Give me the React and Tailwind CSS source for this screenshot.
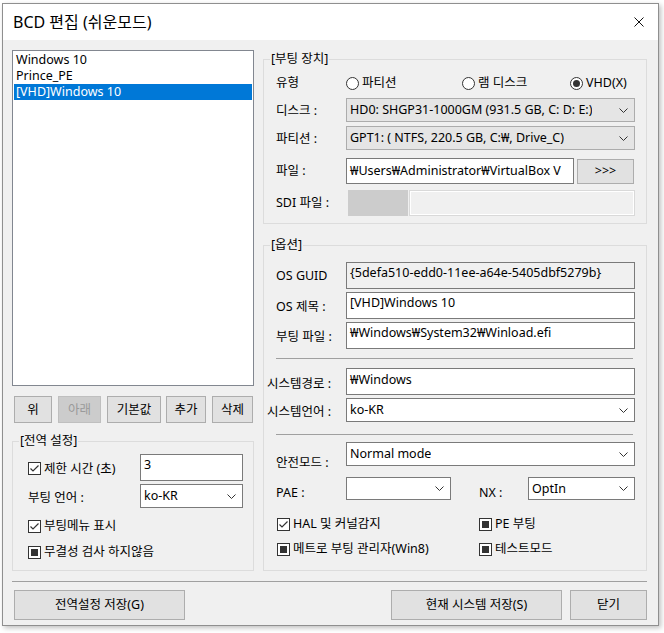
import React from 'react';

const Chevron = () => (
  <svg width="9" height="5" viewBox="0 0 9 5" className="shrink-0">
    <polyline points="0.5,0.5 4.5,4.5 8.5,0.5" fill="none" stroke="#333" strokeWidth="1" />
  </svg>
);

const Select = ({ value, gray, className = '' }) => (
  <div
    className={`flex items-center justify-between pl-[3px] pr-[6px] border ${
      gray ? 'bg-[#e5e5e5] border-[#acacac]' : 'bg-white border-[#7a7a7a]'
    } ${className}`}
  >
    <span className="whitespace-nowrap overflow-hidden">{value}</span>
    <Chevron />
  </div>
);

const Input = ({ value, readOnly, className = '' }) => (
  <div
    className={`flex items-start pl-[3px] pt-[2px] border border-[#7a7a7a] overflow-hidden whitespace-nowrap ${
      readOnly ? 'bg-[#f0f0f0]' : 'bg-white'
    } ${className}`}
  >
    {value}
  </div>
);

const Button = ({ children, disabled, className = '' }) => (
  <div
    className={`flex items-center justify-center border ${
      disabled ? 'bg-[#cccccc] border-[#bfbfbf] text-[#9a9a9a]' : 'bg-[#e1e1e1] border-[#adadad]'
    } ${className}`}
  >
    {children}
  </div>
);

const Check = ({ state, label, className = '' }) => (
  <div className={`flex items-center h-[16px] ${className}`}>
    <div className="w-[13px] h-[13px] border border-[#333] bg-white flex items-center justify-center shrink-0">
      {state === 'checked' && (
        <svg width="11" height="11" viewBox="0 0 11 11">
          <polyline points="1.5,5.5 4,8 9.5,2.5" fill="none" stroke="#333" strokeWidth="1.2" />
        </svg>
      )}
      {state === 'mixed' && <div className="w-[7px] h-[7px] bg-[#333]" />}
    </div>
    <span className="ml-[3px] whitespace-nowrap">{label}</span>
  </div>
);

const Radio = ({ checked, label, className = '' }) => (
  <div className={`flex items-center ${className}`}>
    <div className="w-[13px] h-[13px] rounded-full border border-[#333] bg-white flex items-center justify-center shrink-0">
      {checked && <div className="w-[7px] h-[7px] rounded-full bg-[#333]" />}
    </div>
    <span className="ml-[3px] whitespace-nowrap">{label}</span>
  </div>
);

const Group = ({ label, className = '', children }) => (
  <div className={`relative border border-[#dcdcdc] ${className}`}>
    <span className="absolute left-[6px] -top-[9px] px-px bg-[#f0f0f0] leading-[16px] whitespace-nowrap">
      {label}
    </span>
    {children}
  </div>
);

const Sep = ({ className = '' }) => <div className={`h-px bg-[#a0a0a0] ${className}`} />;

export default function App() {
  return (
    <div className="w-[664px] h-[633px] overflow-hidden bg-white font-['Noto_Sans','Noto_Sans_CJK_KR',sans-serif] text-[12.5px] leading-[16px] text-black">
      <div className="ml-[2px] mt-[3px] w-[657px] h-[623px] border border-[#8f8f8f] bg-[#f0f0f0] shadow-[2px_2px_5px_rgba(0,0,0,0.25)] flex flex-col">
        {/* title bar */}
        <div className="h-[36px] shrink-0 bg-white flex items-center justify-between pl-[10px] pr-[14px]">
          <span className="text-[16px] leading-[20px]">BCD 편집 (쉬운모드)</span>
          <svg width="10" height="10" viewBox="0 0 10 10">
            <line x1="0.5" y1="0.5" x2="9.5" y2="9.5" stroke="#111" strokeWidth="1" />
            <line x1="9.5" y1="0.5" x2="0.5" y2="9.5" stroke="#111" strokeWidth="1" />
          </svg>
        </div>

        <div className="flex-1 pl-[9px] pr-[11px] pt-[10px] flex flex-col">
          <div className="flex">
            {/* left column */}
            <div className="w-[242px] flex flex-col">
              <div className="h-[336px] border border-[#828790] bg-white p-px">
                <div className="h-[16px] pl-[2px]">Windows 10</div>
                <div className="h-[16px] pl-[2px]">Prince_PE</div>
                <div className="h-[16px] pl-[2px] bg-[#0078d7] text-white">[VHD]Windows 10</div>
              </div>

              <div className="mt-[10px] h-[27px] flex pl-[2px]">
                <Button className="w-[38px]">위</Button>
                <Button disabled className="w-[43px] ml-[6px]">아래</Button>
                <Button className="w-[54px] ml-[6px]">기본값</Button>
                <Button className="w-[40px] ml-[5px]">추가</Button>
                <Button className="w-[41px] ml-[6px]">삭제</Button>
              </div>

              <Group label="[전역 설정]" className="mt-[18px] h-[130px] pl-[15px] pr-[10px]">
                <div className="mt-[12px] flex items-center h-[27px]">
                  <Check state="checked" label="제한 시간 (초)" className="w-[112px] mt-[2px]" />
                  <Input value="3" className="flex-1 h-[27px]" />
                </div>
                <div className="mt-[3px] flex items-start h-[24px]">
                  <span className="w-[112px] mt-[6px]">부팅 언어 :</span>
                  <Select value="ko-KR" className="flex-1 h-[24px]" />
                </div>
                <Check state="checked" label="부팅메뉴 표시" className="mt-[10px]" />
                <Check state="mixed" label="무결성 검사 하지않음" className="mt-[10px]" />
              </Group>
            </div>

            {/* right column */}
            <div className="ml-[9px] w-[384px] flex flex-col">
              <Group label="[부팅 장치]" className="mt-[9px] h-[165px] pl-[12px] pr-[11px]">
                <div className="mt-[15px] h-[16px] flex items-center">
                  <span className="w-[70px]">유형</span>
                  <Radio label="파티션" className="w-[116px]" />
                  <Radio label="램 디스크" className="w-[108px]" />
                  <Radio checked label="VHD(X)" />
                </div>
                <div className="mt-[7px] flex items-center">
                  <span className="w-[70px] mt-[2px]">디스크 :</span>
                  <Select gray value="HD0: SHGP31-1000GM (931.5 GB, C: D: E:)" className="flex-1 h-[24px]" />
                </div>
                <div className="mt-[4px] flex items-center">
                  <span className="w-[70px] mt-[2px]">파티션 :</span>
                  <Select gray value="GPT1: ( NTFS, 220.5 GB, C:₩, Drive_C)" className="flex-1 h-[24px]" />
                </div>
                <div className="mt-[8px] flex items-center">
                  <span className="w-[70px]">파일 :</span>
                  <Input value="₩Users₩Administrator₩VirtualBox V" className="w-[228px] h-[26px] pt-[4px]" />
                  <Button className="ml-[3px] w-[57px] h-[25px]">&gt;&gt;&gt;</Button>
                </div>
                <div className="mt-[6px] flex items-center">
                  <span className="w-[70px]">SDI 파일 :</span>
                  <div className="ml-[2px] w-[60px] h-[26px] bg-[#cccccc]" />
                  <div className="ml-[1px] flex-1 h-[26px] border border-[#d9d9d9] bg-[#f0f0f0] shadow-[inset_0_0_0_1px_#ffffff]" />
                </div>
              </Group>

              <Group label="[옵션]" className="mt-[21px] h-[326px] pl-[12px] pr-[11px]">
                <div className="mt-[16px] flex items-center">
                  <span className="w-[70px]">OS GUID</span>
                  <Input readOnly value="{5defa510-edd0-11ee-a64e-5405dbf5279b}" className="flex-1 h-[27px]" />
                </div>
                <div className="mt-[3px] flex items-center">
                  <span className="w-[70px] mt-[2px]">OS 제목 :</span>
                  <Input value="[VHD]Windows 10" className="flex-1 h-[27px]" />
                </div>
                <div className="mt-[3px] flex items-center">
                  <span className="w-[70px] mt-[2px]">부팅 파일 :</span>
                  <Input value="₩Windows₩System32₩Winload.efi" className="flex-1 h-[27px]" />
                </div>
                <Sep className="mt-[9px] mr-[2px]" />
                <div className="mt-[9px] flex items-center -ml-[9px]">
                  <span className="w-[79px] mt-[4px]">시스템경로 :</span>
                  <Input value="₩Windows" className="flex-1 h-[27px] pt-[3px]" />
                </div>
                <div className="mt-[3px] flex items-center -ml-[9px]">
                  <span className="w-[79px] mt-[4px]">시스템언어 :</span>
                  <Select value="ko-KR" className="flex-1 h-[24px]" />
                </div>
                <Sep className="mt-[12px] mr-[2px]" />
                <div className="mt-[7px] flex items-start h-[24px]">
                  <span className="w-[70px] mt-[13px]">안전모드 :</span>
                  <Select value="Normal mode" className="flex-1 h-[24px]" />
                </div>
                <div className="mt-[11px] flex items-start h-[23px]">
                  <span className="w-[70px] mt-[8px]">PAE :</span>
                  <Select value="" className="w-[105px] h-[23px]" />
                  <span className="ml-[28px] w-[49px] mt-[8px]">NX :</span>
                  <Select value="OptIn" className="flex-1 h-[23px]" />
                </div>
                <div className="mt-[16px] flex">
                  <Check state="checked" label="HAL 및 커널감지" className="ml-px w-[202px]" />
                  <Check state="mixed" label="PE 부팅" />
                </div>
                <div className="mt-[9px] flex">
                  <Check state="mixed" label="메트로 부팅 관리자(Win8)" className="ml-px w-[202px]" />
                  <Check state="mixed" label="테스트모드" />
                </div>
              </Group>
            </div>
          </div>

          <Sep className="mt-[10px]" />

          <div className="mt-[8px] flex h-[30px]">
            <Button className="ml-[2px] w-[171px]">전역설정 저장(G)</Button>
            <Button className="ml-auto w-[171px]">현재 시스템 저장(S)</Button>
            <Button className="ml-[8px] w-[77px]">닫기</Button>
          </div>
        </div>
      </div>
    </div>
  );
}
